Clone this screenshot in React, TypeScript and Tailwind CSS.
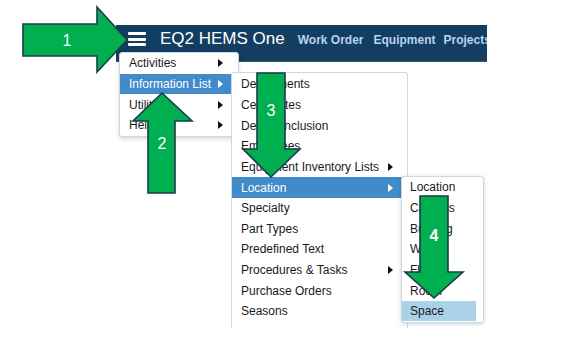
const mainItems = [
  { label: "Activities", sub: true },
  { label: "Information List", sub: true, active: true },
  { label: "Utilities", sub: true },
  { label: "Help", sub: true },
];

const infoItems = [
  { label: "Departments" },
  { label: "Certificates" },
  { label: "Device Inclusion" },
  { label: "Employees" },
  { label: "Equipment Inventory Lists", sub: true },
  { label: "Location", sub: true, active: true },
  { label: "Specialty" },
  { label: "Part Types" },
  { label: "Predefined Text" },
  { label: "Procedures & Tasks", sub: true },
  { label: "Purchase Orders" },
  { label: "Seasons" },
];

const locationItems = ["Location", "Campus", "Building", "Wing", "Floor", "Room", "Space"];

type Item = { label: string; sub?: boolean; active?: boolean };

const Caret = ({ white }: { white?: boolean }) => (
  <svg width="5" height="8" viewBox="0 0 5 8" className="shrink-0">
    <path d="M0 0 L5 4 L0 8 Z" fill={white ? "#ffffff" : "#111111"} />
  </svg>
);

const MenuRow = ({ item, caretPad }: { item: Item; caretPad: string }) => (
  <div
    className={`flex items-center h-[20.65px] pl-[9px] ${caretPad} ${
      item.active ? "bg-[#428bca] text-white" : "text-[#1a1a1a]"
    }`}
  >
    <span className="flex-1 whitespace-nowrap">{item.label}</span>
    {item.sub && <Caret white={item.active} />}
  </div>
);

const Arrows = () => (
  <svg
    className="absolute inset-0 pointer-events-none"
    width="576"
    height="347"
    viewBox="0 0 576 347"
  >
    <g fill="#00b050" stroke="#1d3a4b" strokeWidth="1.6" strokeLinejoin="miter">
      <polygon points="23,24 97,24 97,7 127,40 97,72 97,56 23,56" />
      <polygon points="162,93 192,121 175,121 175,193 148,193 148,121 133,121" />
      <polygon points="257,73 285,73 285,149 300,149 271,177 243,149 257,149" />
      <polygon points="420,196 448,196 448,272 463,272 434,298 405,272 420,272" />
    </g>
    <g fill="#ffffff" fontFamily="'Liberation Sans', Arial, sans-serif" fontSize="16" textAnchor="middle">
      <text x="67" y="46">1</text>
      <text x="162" y="149">2</text>
      <text x="271" y="116">3</text>
      <text x="434" y="241" fontWeight="bold">4</text>
    </g>
  </svg>
);

export default function App() {
  return (
    <div className="relative w-[576px] h-[347px] overflow-hidden bg-white font-['Liberation_Sans',Arial,sans-serif]">
      <div className="pt-[25px] pl-[116px]">
        <header className="flex items-start w-[371px] h-[37px] overflow-hidden bg-[#143d62] border-b border-[#2f587c]">
          <div className="shrink-0 mt-[7px] ml-[12px] flex flex-col gap-[2.5px] w-[18px]">
            <span className="h-[3px] rounded-[1px] bg-white" />
            <span className="h-[3px] rounded-[1px] bg-white" />
            <span className="h-[3px] rounded-[1px] bg-white" />
          </div>
          <div className="shrink-0 mt-[3.5px] ml-[14px] text-[17px] leading-[20px] text-white whitespace-nowrap">
            EQ2 HEMS One
          </div>
          <nav className="shrink-0 mt-[7px] ml-[13px] flex text-[12px] leading-[16px] font-bold text-[#b9d4ea] whitespace-nowrap">
            <span>Work Order</span>
            <span className="ml-[10px]">Equipment</span>
            <span className="ml-[8px]">Projects</span>
          </nav>
        </header>
      </div>

      {/* main dropdown */}
      <div className="absolute left-[119px] top-[52px] w-[120px] bg-white border border-[#cfd8de] rounded-[3px] shadow-[0_2px_4px_rgba(0,0,0,0.15)] text-[12px]">
        {mainItems.map((it) => (
          <MenuRow key={it.label} item={it} caretPad="pr-[15px]" />
        ))}
      </div>

      {/* information list submenu */}
      <div className="absolute left-[231px] top-[72px] w-[177px] h-[256px] pt-[1px] bg-white border border-b-0 border-[#cfd8de] rounded-t-[3px] text-[12px]">
        {infoItems.map((it) => (
          <MenuRow key={it.label} item={it} caretPad="pr-[14px]" />
        ))}
      </div>

      {/* location submenu */}
      <div className="absolute left-[401px] top-[176px] w-[83px] h-[147px] bg-white border border-[#cfd8de] rounded-[3px] shadow-[0_1px_4px_rgba(0,0,0,0.18)] text-[12px] text-[#1a1a1a]">
        {locationItems.map((l) => (
          <div
            key={l}
            className={`h-[20.65px] flex items-center pl-[8px] mr-[7px] ${
              l === "Space" ? "bg-[#a9d2e8]" : ""
            }`}
          >
            {l}
          </div>
        ))}
      </div>

      <Arrows />
    </div>
  );
}
